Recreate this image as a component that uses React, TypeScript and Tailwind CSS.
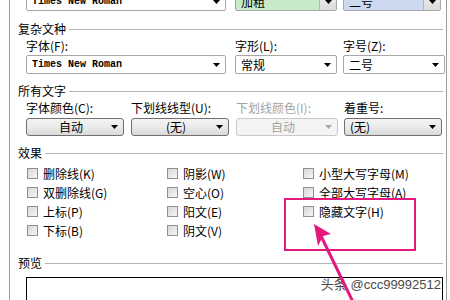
import React from 'react';

const cjk = '"Noto Sans CJK SC", "Liberation Sans", sans-serif';

function Arrow({ gray = false }: { gray?: boolean }) {
  return (
    <svg width="7" height="4" viewBox="0 0 7 4" className="shrink-0">
      <polygon points="0,0 7,0 3.5,4" fill={gray ? '#a9a9a9' : '#000'} />
    </svg>
  );
}

function Combo({ text, className = '', mono = false, arrowBtn = false }: { text: string; className?: string; mono?: boolean; arrowBtn?: boolean }) {
  return (
    <div className={`flex items-stretch h-full border border-[#a7a7a7] rounded-[2px] ${className}`}>
      <div
        className={`flex-1 flex items-center pl-[5px] ${mono ? 'text-[10px]' : 'text-[12px]'}`}
        style={mono ? { fontFamily: '"Liberation Mono", monospace', fontWeight: 600 } : undefined}
      >
        {text}
      </div>
      {arrowBtn ? (
        <div className="w-[17px] flex items-center justify-center border-l border-[#b5b5b5] bg-gradient-to-b from-[#f2f2f2] to-[#dadada]">
          <Arrow />
        </div>
      ) : (
        <div className="w-[17px] flex items-center justify-center">
          <Arrow />
        </div>
      )}
    </div>
  );
}

function DropBtn({ text, className = '', disabled = false, left = false }: { text: string; className?: string; disabled?: boolean; left?: boolean }) {
  return (
    <div
      className={`flex items-center h-full rounded-[3px] border ${
        disabled
          ? 'border-[#c9c9c9] bg-[#f4f4f4] text-[#a3a3a3]'
          : 'border-[#707070] bg-gradient-to-b from-[#f3f3f3] via-[#ebebeb] to-[#d9d9d9]'
      } ${className}`}
    >
      <div className={`flex-1 text-[12px] ${left ? 'pl-[5px]' : 'text-center pl-[10px]'}`}>{text}</div>
      <div className="w-[18px] flex items-center justify-center">
        <Arrow gray={disabled} />
      </div>
    </div>
  );
}

function Header({ text, className = '' }: { text: string; className?: string }) {
  return (
    <div className={`flex items-center h-[18px] pl-[8px] pr-[3px] ${className}`}>
      <span className="text-[12px] leading-none">{text}</span>
      <div className="flex-1 h-px bg-[#b4b4b4] ml-[3px]" />
    </div>
  );
}

function Check({ label, className = '' }: { label: string; className?: string }) {
  return (
    <div className={`flex items-center h-[19px] ${className}`}>
      <div className="w-[11px] h-[11px] border border-[#8f8f8f] bg-gradient-to-br from-[#d8d8d8] to-[#f6f6f6] shrink-0" />
      <span className="ml-[5px] text-[12px] leading-none whitespace-nowrap">{label}</span>
    </div>
  );
}

export default function App() {
  return (
    <div className="relative w-[450px] h-[300px] overflow-hidden bg-white text-black" style={{ fontFamily: cjk }}>
      <div className="ml-[9px] w-[438px] h-[320px] border-l border-r border-[#9a9a9a]">
        {/* Western font row (cut off) */}
        <div className="flex h-[19px] mt-[-8px] pl-[16px]">
          <Combo text="Times New Roman" mono className="w-[200px] bg-white" />
          <Combo text="加粗" arrowBtn className="w-[102px] ml-[9px] bg-[#c8eac8]" />
          <Combo text="二号" arrowBtn className="w-[98px] ml-[6px] bg-[#cdd9ef]" />
        </div>

        {/* 复杂文种 */}
        <Header text="复杂文种" className="mt-[9px]" />
        <div className="flex h-[16px] items-center pl-[16px] text-[12px] leading-none">
          <span className="w-[200px]">字体(F):</span>
          <span className="w-[102px] ml-[9px]">字形(L):</span>
          <span className="w-[102px] ml-[6px]">字号(Z):</span>
        </div>
        <div className="flex h-[19px] mt-[1px] pl-[16px]">
          <Combo text="Times New Roman" mono className="w-[200px]" />
          <Combo text="常规" className="w-[102px] ml-[9px]" />
          <Combo text="二号" className="w-[102px] ml-[6px]" />
        </div>

        {/* 所有文字 */}
        <Header text="所有文字" className="mt-[8px]" />
        <div className="flex h-[16px] items-center pl-[16px] text-[12px] leading-none">
          <span className="w-[98px]">字体颜色(C):</span>
          <span className="w-[98px] ml-[7px]">下划线线型(U):</span>
          <span className="w-[102px] ml-[7px] text-[#a3a3a3]">下划线颜色(I):</span>
          <span className="w-[98px] ml-[6px]">着重号:</span>
        </div>
        <div className="flex h-[18px] mt-[2px] pl-[16px]">
          <DropBtn text="自动" className="w-[98px]" />
          <DropBtn text="(无)" className="w-[98px] ml-[7px]" />
          <DropBtn text="自动" disabled className="w-[102px] ml-[7px]" />
          <DropBtn text="(无)" left className="w-[98px] ml-[6px]" />
        </div>

        {/* 效果 */}
        <Header text="效果" className="mt-[8px]" />
        <div className="grid grid-cols-[140px_136px_1fr] mt-[2px] pl-[17px]">
          <Check label="删除线(K)" />
          <Check label="阴影(W)" />
          <Check label="小型大写字母(M)" />
          <Check label="双删除线(G)" />
          <Check label="空心(O)" />
          <Check label="全部大写字母(A)" />
          <Check label="上标(P)" />
          <Check label="阳文(E)" />
          <Check label="隐藏文字(H)" />
          <Check label="下标(B)" />
          <Check label="阴文(V)" />
        </div>

        {/* 预览 */}
        <Header text="预览" className="mt-[14px]" />
        <div className="relative ml-[16px] mr-[3px] mt-[5px] h-[40px] border border-black">
          <span
            className="absolute right-[1px] top-0 text-[13px] leading-[14px] text-[#4a4a4a]"
            style={{ fontFamily: '"Liberation Sans", "Noto Sans CJK SC", sans-serif' }}
          >
            头条 @ccc99992512
          </span>
        </div>
      </div>

      {/* Annotation overlay */}
      <div className="absolute left-[284px] top-[198px] w-[132px] h-[53px] border-2 border-[#e3197f]" />
      <svg className="absolute inset-0 pointer-events-none" width="450" height="300" viewBox="0 0 450 300">
        <line x1="353" y1="302" x2="321" y2="236" stroke="#e3197f" strokeWidth="3" />
        <polygon points="314,224 331,234 323,236 318,246" fill="#e3197f" />
      </svg>
    </div>
  );
}
